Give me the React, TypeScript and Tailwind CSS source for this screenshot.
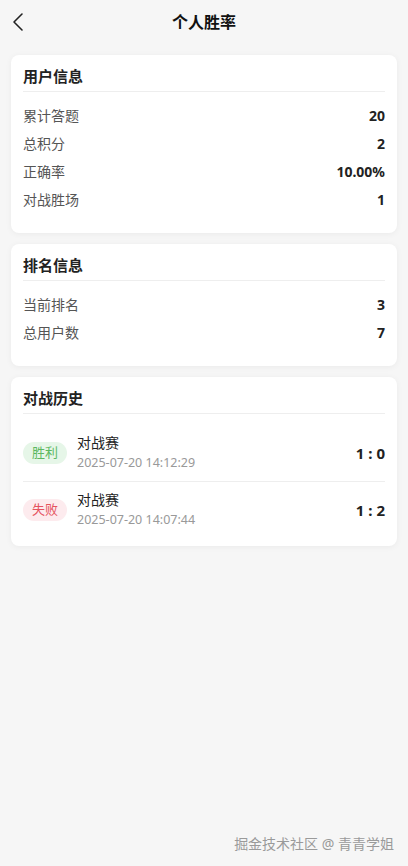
const userInfo = [
  { label: "累计答题", value: "20" },
  { label: "总积分", value: "2" },
  { label: "正确率", value: "10.00%" },
  { label: "对战胜场", value: "1" },
];

const rankInfo = [
  { label: "当前排名", value: "3" },
  { label: "总用户数", value: "7" },
];

const history = [
  { win: true, title: "对战赛", time: "2025-07-20 14:12:29", score: "1 : 0" },
  { win: false, title: "对战赛", time: "2025-07-20 14:07:44", score: "1 : 2" },
];

function Card({ title, children }: { title: string; children: React.ReactNode }) {
  return (
    <div className="rounded-lg bg-white px-3 pt-[10px] pb-[20px] shadow-[0_1px_6px_rgba(0,0,0,0.05)]">
      <h3 className="border-b border-[#eeeeee] pb-[4px] text-[15px] font-bold leading-[22px] text-[#222]">
        {title}
      </h3>
      {children}
    </div>
  );
}

function InfoRows({ rows }: { rows: { label: string; value: string }[] }) {
  return (
    <div className="mt-[9px]">
      {rows.map((r) => (
        <div key={r.label} className="flex h-[28px] items-center justify-between">
          <span className="text-[14px] text-[#555]">{r.label}</span>
          <span className="text-[14px] font-bold text-[#222]">{r.value}</span>
        </div>
      ))}
    </div>
  );
}

export default function App() {
  return (
    <div
      className="relative min-h-[866px] w-full bg-[#f6f6f6]"
      style={{ fontFamily: '"Noto Sans", "Noto Sans CJK SC", sans-serif' }}
    >
      <header className="relative flex h-[44px] items-center justify-center">
        <svg
          className="absolute left-[10px] top-[12px]"
          width="16"
          height="20"
          viewBox="0 0 16 20"
          fill="none"
          stroke="#222"
          strokeWidth="1.6"
          strokeLinecap="round"
          strokeLinejoin="round"
        >
          <polyline points="12,2 4,10 12,18" />
        </svg>
        <h1 className="text-[16px] font-bold text-[#111]">个人胜率</h1>
      </header>

      <div className="flex flex-col gap-[11px] px-[11px] pt-[11px]">
        <Card title="用户信息">
          <InfoRows rows={userInfo} />
        </Card>
        <Card title="排名信息">
          <InfoRows rows={rankInfo} />
        </Card>
        <div className="rounded-lg bg-white px-3 pt-[10px] pb-[8px] shadow-[0_1px_6px_rgba(0,0,0,0.05)]">
          <h3 className="border-b border-[#eeeeee] pb-[4px] text-[15px] font-bold leading-[22px] text-[#222]">
            对战历史
          </h3>
          <div className="mt-[11px]">
            {history.map((h, i) => (
              <div
                key={h.time}
                className={
                  "flex items-center py-2 " + (i < history.length - 1 ? "border-b border-[#eeeeee]" : "")
                }
              >
                <span
                  className={
                    h.win
                      ? "flex h-[22px] w-[44px] items-center justify-center rounded-full bg-[#e6f6e8] text-[13px] text-[#5cb860]"
                      : "flex h-[22px] w-[44px] items-center justify-center rounded-full bg-[#fdebee] text-[13px] text-[#e5535e]"
                  }
                >
                  {h.win ? "胜利" : "失败"}
                </span>
                <div className="ml-[10px] flex-1">
                  <p className="text-[14px] leading-[20px] text-[#222]">{h.title}</p>
                  <p className="text-[12.5px] leading-[20px] text-[#999]">{h.time}</p>
                </div>
                <span className="text-[15px] font-bold text-[#222]">{h.score}</span>
              </div>
            ))}
          </div>
        </div>
      </div>

      <div className="absolute right-[14px] bottom-[12px] text-[14px] text-[#9a9a9a]">
        掘金技术社区 @ 青青学姐
      </div>
    </div>
  );
}
